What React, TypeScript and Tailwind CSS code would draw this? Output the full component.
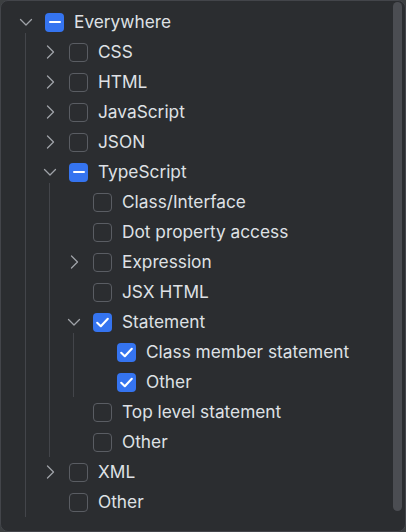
import type { ReactNode } from 'react';

type Check = 'none' | 'partial' | 'checked';

interface TreeNode {
  label: string;
  check: Check;
  open?: boolean;
  children?: TreeNode[];
}

const tree: TreeNode = {
  label: 'Everywhere',
  check: 'partial',
  open: true,
  children: [
    { label: 'CSS', check: 'none', children: [] },
    { label: 'HTML', check: 'none', children: [] },
    { label: 'JavaScript', check: 'none', children: [] },
    { label: 'JSON', check: 'none', children: [] },
    {
      label: 'TypeScript',
      check: 'partial',
      open: true,
      children: [
        { label: 'Class/Interface', check: 'none' },
        { label: 'Dot property access', check: 'none' },
        { label: 'Expression', check: 'none', children: [] },
        { label: 'JSX HTML', check: 'none' },
        {
          label: 'Statement',
          check: 'checked',
          open: true,
          children: [
            { label: 'Class member statement', check: 'checked' },
            { label: 'Other', check: 'checked' },
          ],
        },
        { label: 'Top level statement', check: 'none' },
        { label: 'Other', check: 'none' },
      ],
    },
    { label: 'XML', check: 'none', children: [] },
    { label: 'Other', check: 'none' },
  ],
};

function Chevron({ open }: { open: boolean }) {
  return (
    <svg width="16" height="16" viewBox="0 0 16 16" fill="none" stroke="#9fa2a8" strokeWidth="1.3" strokeLinecap="round" strokeLinejoin="round">
      {open ? <polyline points="2.5,5.5 8,11 13.5,5.5" /> : <polyline points="5.5,2 11.5,8 5.5,14" />}
    </svg>
  );
}

function Checkbox({ state }: { state: Check }) {
  if (state === 'none') {
    return <span className="block w-[19px] h-[19px] shrink-0 rounded-[4px] border border-[#5a5d63]" />;
  }
  return (
    <span className="w-[19px] h-[19px] shrink-0 rounded-[4px] bg-[#3574f0] flex items-center justify-center">
      {state === 'partial' ? (
        <span className="w-[12px] h-[2.5px] rounded-full bg-white" />
      ) : (
        <svg width="19" height="19" viewBox="0 0 19 19" fill="none" stroke="white" strokeWidth="2.1" strokeLinecap="round" strokeLinejoin="round">
          <polyline points="4.2,9.8 7.8,13.2 14.8,5.8" />
        </svg>
      )}
    </span>
  );
}

function Node({ node }: { node: TreeNode }) {
  const hasChildren = node.children !== undefined;
  let kids: ReactNode = null;
  if (node.open && node.children) {
    kids = (
      <div className="relative pl-6">
        <span className="absolute left-[24px] -top-1 bottom-0 w-px bg-[#43454a]" />
        {node.children.map((c, i) => (
          <Node key={i} node={c} />
        ))}
      </div>
    );
  }
  return (
    <div>
      <div className="flex items-center h-[30px] pl-[17px]">
        <span className="w-4 h-4 shrink-0 flex items-center justify-center">
          {hasChildren && <Chevron open={!!node.open} />}
        </span>
        <span className="ml-[11px] shrink-0">
          <Checkbox state={node.check} />
        </span>
        <span className="ml-[10px] text-[17.3px] text-[#dfe1e5] whitespace-nowrap leading-none">{node.label}</span>
      </div>
      {kids}
    </div>
  );
}

export default function App() {
  return (
    <div className="w-[406px] h-[532px] bg-[#3c3f41]" style={{ fontFamily: 'Inter, "Noto Sans", sans-serif' }}>
      <div className="relative w-full h-full bg-[#2b2d30] border border-[#43454a] rounded-[8px] overflow-hidden pt-[6px]">
        <Node node={tree} />
        <span className="absolute right-[3px] top-[1px] w-[9px] h-[509px] rounded-full bg-[#4b4d52]" />
      </div>
    </div>
  );
}
